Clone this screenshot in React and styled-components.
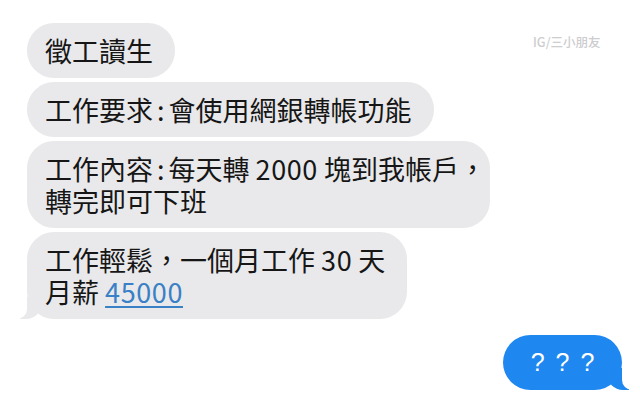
import React from 'react';
import styled, {createGlobalStyle, css} from 'styled-components';

const GlobalStyle = createGlobalStyle`
  html, body {
    margin: 0;
    padding: 0;
    background: #fff;
  }
`;

const Screen = styled.div`
  position: relative;
  width: 640px;
  height: 403px;
  box-sizing: border-box;
  padding: 23px 18px 0 27px;
  display: flex;
  flex-direction: column;
  font-family: "Noto Sans CJK TC", "Noto Sans", sans-serif;
  background: #fff;
  overflow: hidden;
`;

const Watermark = styled.div`
  position: absolute;
  top: 32px;
  left: 533px;
  font-size: 12.5px;
  font-weight: 500;
  color: #cdcdd0;
`;

const Thread = styled.div`
  display: flex;
  flex-direction: column;
  align-items: flex-start;
  gap: 4px;
`;

const Bubble = styled.div`
  position: relative;
  box-sizing: border-box;
  padding: 11.5px 22px 11.5px 18px;
  border-radius: 27px;
  background: #e9e9eb;
  color: #161616;
  font-size: 27px;
  line-height: 32px;
  white-space: nowrap;

  ${props => props.tail && css`
    &::before {
      content: "";
      position: absolute;
      bottom: 0;
      left: -7px;
      width: 22px;
      height: 22px;
      background: #e9e9eb;
      border-bottom-right-radius: 16px;
    }
    &::after {
      content: "";
      position: absolute;
      bottom: 0;
      left: -10px;
      width: 10px;
      height: 22px;
      background: #fff;
      border-bottom-right-radius: 10px;
    }
  `};
`;

// ascii colon sits tighter in Noto than in the phone font
const Colon = styled.span`
  margin: 0 4px;
`;

// trailing full-width comma: the phone font leaves less room after the glyph
const EndComma = styled.span`
  margin-right: -18px;
`;

const Num = styled.span`
  letter-spacing: 0.6px;
`;

const Link = styled(Num)`
  color: #3a80c6;
  text-decoration: underline;
  text-decoration-thickness: 1.5px;
  text-underline-offset: 3px;
`;

const Outgoing = styled.div`
  position: relative;
  align-self: flex-end;
  margin-top: 16px;
  box-sizing: border-box;
  width: 119px;
  height: 55px;
  display: flex;
  align-items: center;
  justify-content: center;
  border-radius: 28px;
  background: #1f87f0;
  color: #fff;
  font-family: "Liberation Sans", "Noto Sans", sans-serif;
  font-size: 25px;
  word-spacing: 4px;

  &::before {
    content: "";
    position: absolute;
    bottom: 0;
    right: -7px;
    width: 22px;
    height: 22px;
    background: #1f87f0;
    border-bottom-left-radius: 16px;
  }
  &::after {
    content: "";
    position: absolute;
    bottom: 0;
    right: -10px;
    width: 10px;
    height: 22px;
    background: #fff;
    border-bottom-left-radius: 10px;
  }
`;

export default function App() {
    return (
        <>
            <GlobalStyle/>
            <Screen>
                <Watermark>IG/三小朋友</Watermark>
                <Thread>
                    <Bubble>徵工讀生</Bubble>
                    <Bubble>工作要求<Colon>:</Colon>會使用網銀轉帳功能</Bubble>
                    <Bubble>
                        工作內容<Colon>:</Colon>每天轉 <Num>2000</Num> 塊到我帳戶<EndComma>，</EndComma><br/>
                        轉完即可下班
                    </Bubble>
                    <Bubble tail>工作輕鬆，一個月工作 <Num>30</Num> 天<br/>月薪 <Link>45000</Link></Bubble>
                </Thread>
                <Outgoing>? ? ?</Outgoing>
            </Screen>
        </>
    );
}
